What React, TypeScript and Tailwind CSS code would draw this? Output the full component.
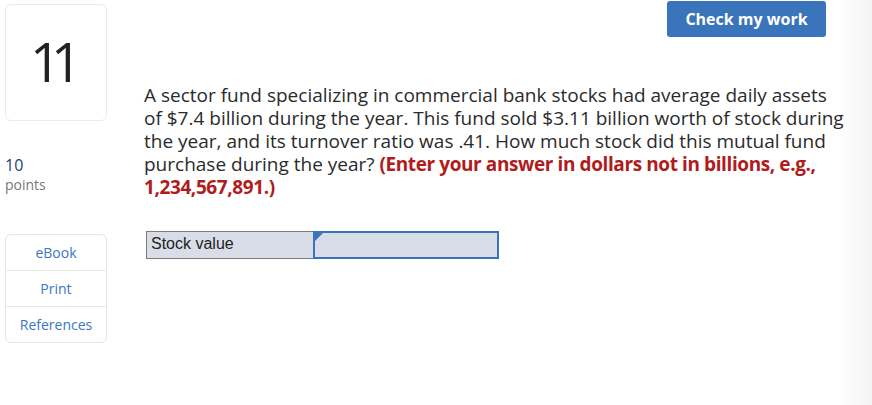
import React from 'react';

export default function App() {
  return (
    <div className="relative w-[872px] h-[405px] overflow-hidden bg-[linear-gradient(to_right,#ffffff_0%,#ffffff_96%,#f4f4f4_100%)] font-['Open_Sans',sans-serif] text-[#333]">
      <div className="flex">
        {/* left rail */}
        <div className="w-[102px] ml-[5px] pt-[4px] flex flex-col">
          <div className="h-[117px] border border-[#eaeaea] rounded-[6px] flex items-center justify-center">
            <span className="text-[54px] leading-none text-[#222] tracking-[-10px] pr-[10px] mt-[-4px]">11</span>
          </div>
          <div className="mt-[35px] text-[16px] leading-[18px] text-[#1f3f6f]">10</div>
          <div className="text-[14px] leading-[16px] text-[#777] mt-[3px]">points</div>
          <div className="mt-[41px] border border-[#e6e6e6] rounded-[6px] flex flex-col text-[14px] text-[#3a76c4] text-center">
            <div className="h-[36px] flex items-center justify-center border-b border-[#e6e6e6]">eBook</div>
            <div className="h-[36px] flex items-center justify-center border-b border-[#e6e6e6]">Print</div>
            <div className="h-[35px] flex items-center justify-center">References</div>
          </div>
        </div>

        {/* main */}
        <div className="flex-1 relative">
          <div className="flex justify-end pr-[46px] pt-[1px]">
            <button className="w-[159px] h-[36px] rounded-[3px] bg-[#3a74ba] text-white font-bold text-[16px]">
              Check my work
            </button>
          </div>
          <p className="ml-[37px] mt-[47px] w-[702px] text-[19px] leading-[23px] text-[#2b2b2b]">
            A sector fund specializing in commercial bank stocks had average daily assets of $7.4 billion during the year. This fund sold $3.11 billion worth of stock during the year, and its turnover ratio was .41. How much stock did this mutual fund purchase during the year?{' '}
            <span className="font-bold text-[#b01c1c] tracking-[-0.4px]">(Enter your answer in dollars not in billions, e.g., 1,234,567,891.)</span>
          </p>
          <div className="ml-[39px] mt-[32px] flex w-[353px] h-[28px]">
            <div className="w-[167px] bg-[#d9dde7] border border-[#7c7c7c] border-r-0 pl-[4px] text-[16px] leading-[24px] text-[#222] font-['Liberation_Sans',sans-serif]">
              Stock value
            </div>
            <div className="relative flex-1 bg-[#d9dde7] border-2 border-[#3a74ba]">
              <div className="absolute left-0 top-0 w-0 h-0 border-t-[8px] border-t-[#3a74ba] border-r-[8px] border-r-transparent" />
            </div>
          </div>
        </div>
      </div>
    </div>
  );
}
